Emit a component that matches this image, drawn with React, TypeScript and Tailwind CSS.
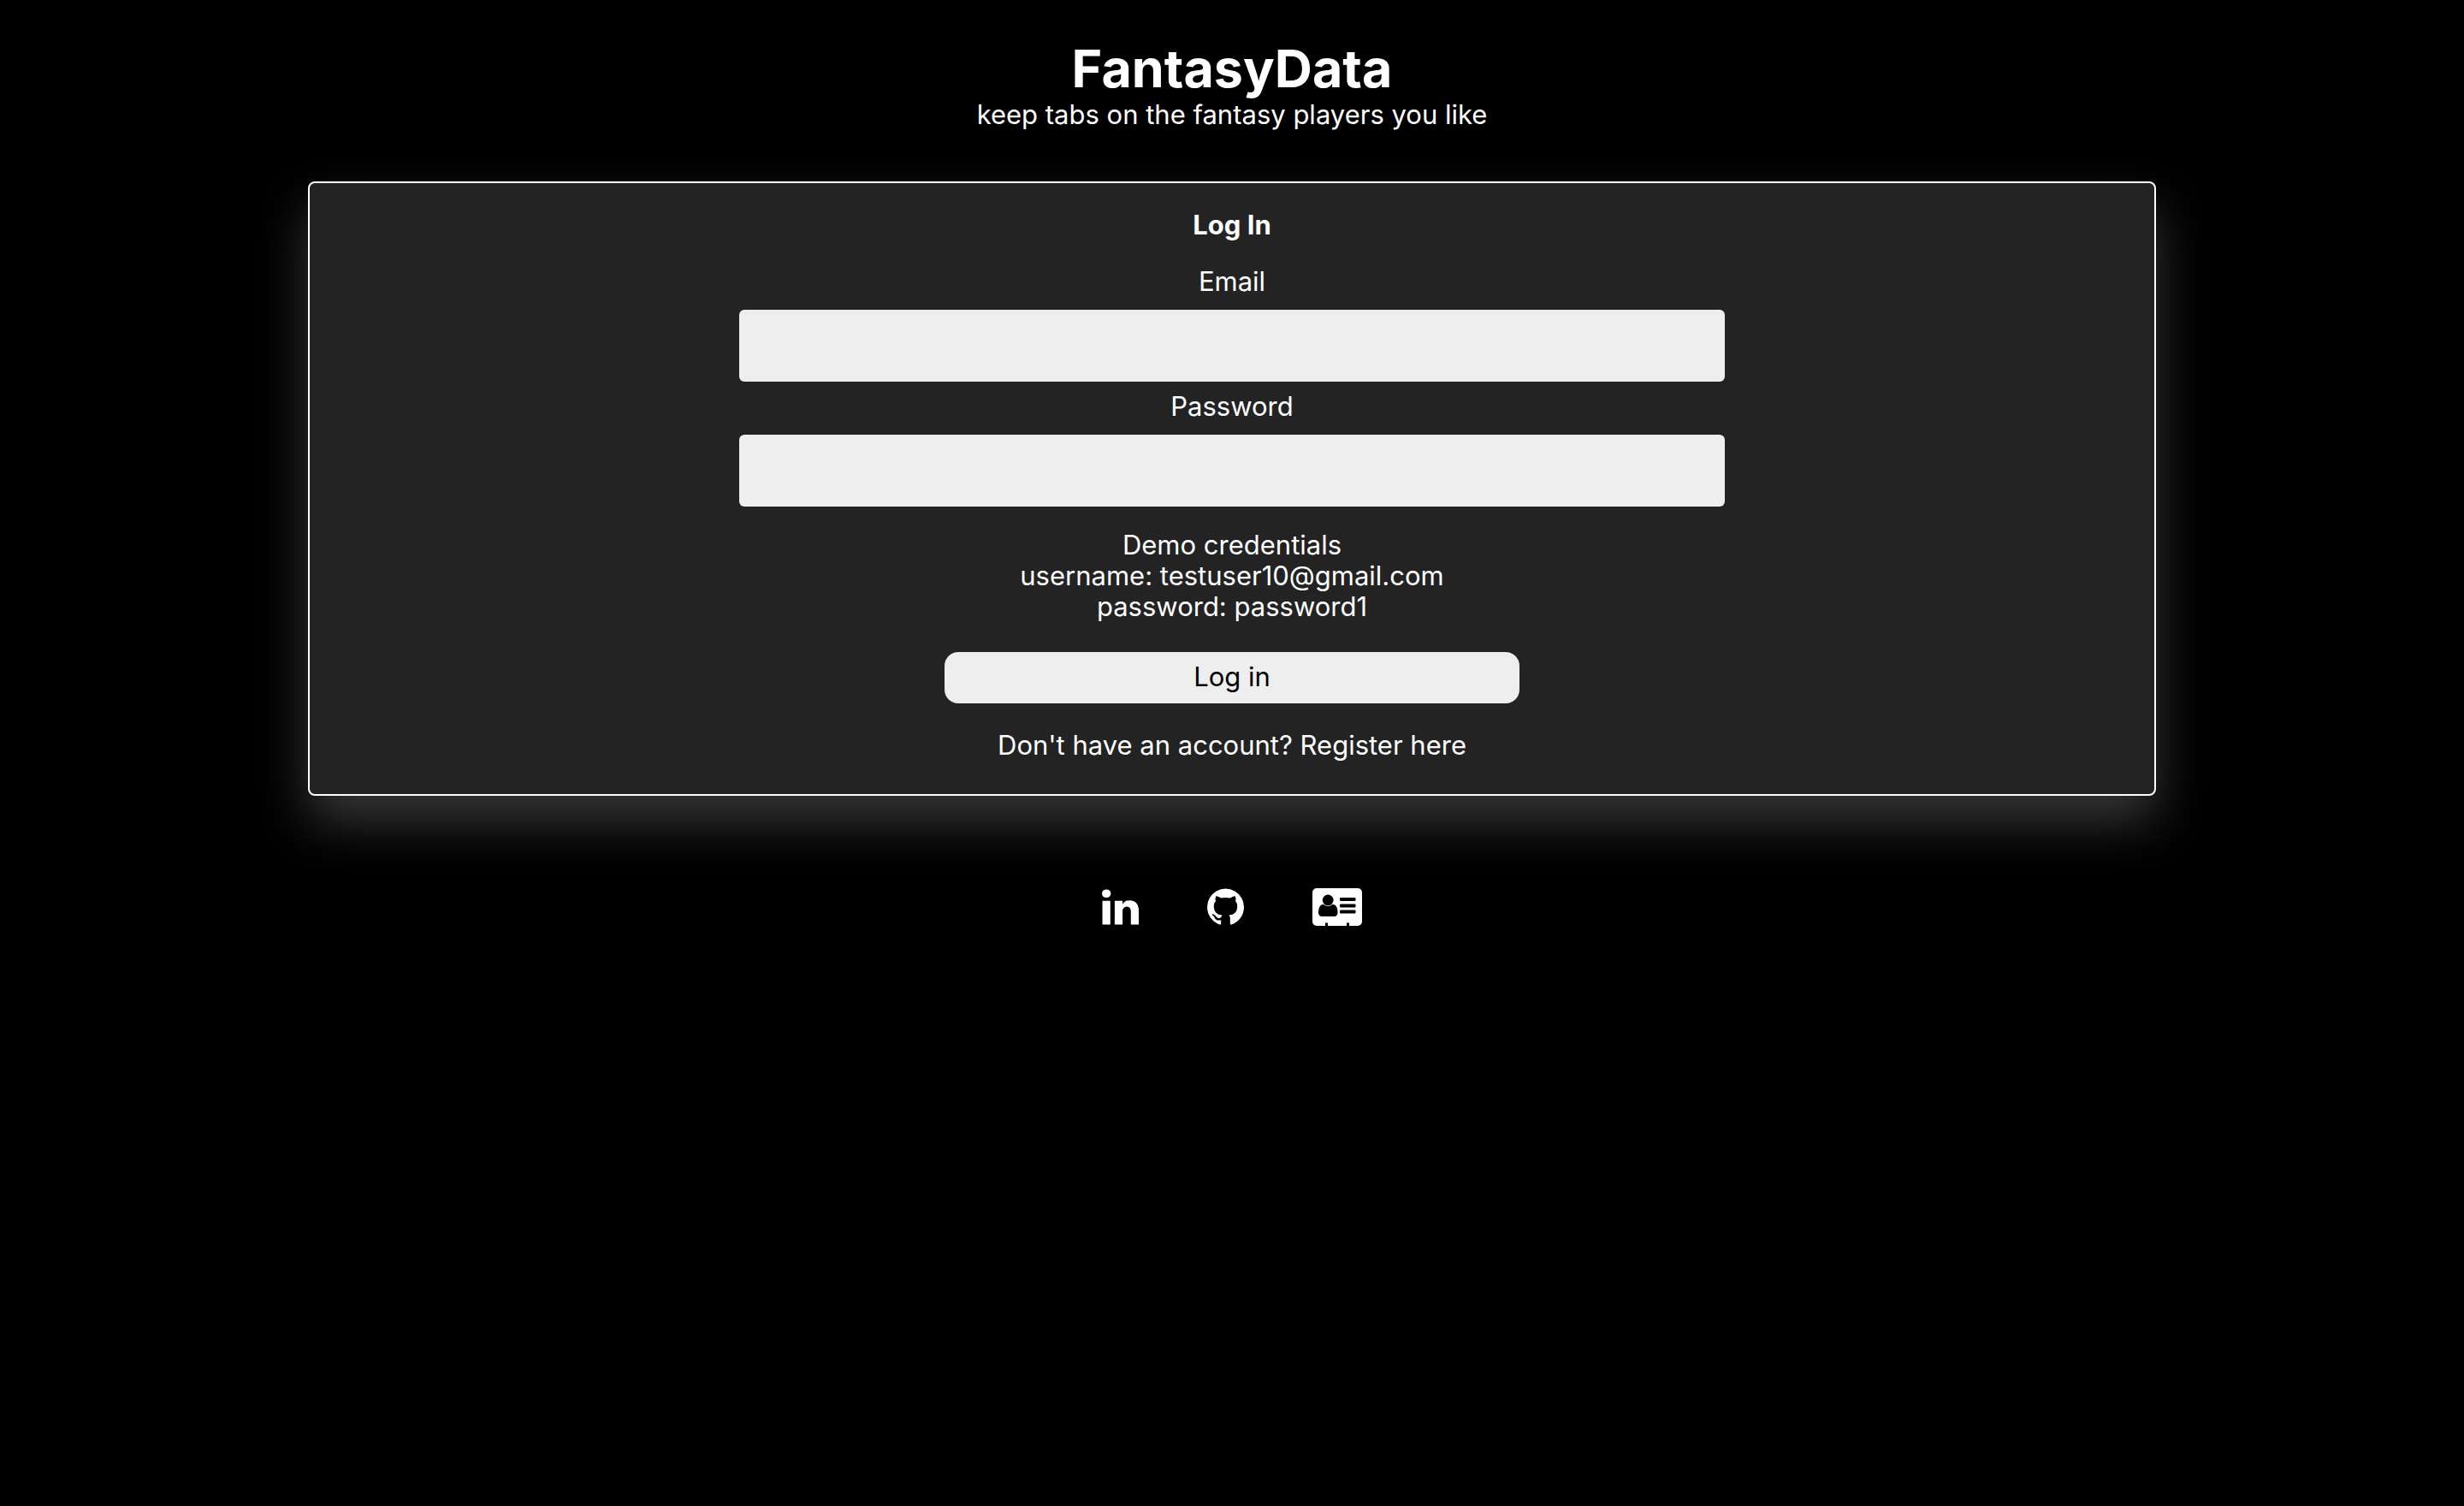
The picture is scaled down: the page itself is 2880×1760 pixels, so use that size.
import type { ComponentProps, ReactNode } from "react";

function Field({ id, label, ...props }: ComponentProps<"input"> & { id: string; label: string }) {
  return (
    <div className="flex w-full flex-col items-center gap-[15px]">
      <label htmlFor={id}>{label}</label>
      <input id={id} name={id} className="h-[84px] w-[53.4%] rounded-md bg-[#eeeeee] px-5 text-black" {...props} />
    </div>
  );
}

function IconLink({ label, children, viewBox, className }: { label: string; children: ReactNode; viewBox: string; className: string }) {
  return (
    <a href="#" aria-label={label}>
      <svg viewBox={viewBox} className={className} fill="currentColor" aria-hidden="true">
        {children}
      </svg>
    </a>
  );
}

export default function App() {
  return (
    <div className="min-h-screen bg-black text-center font-['Inter',sans-serif] text-[31px] leading-9 text-white">
      <header className="pt-11">
        <h1 className="text-[61px] leading-[72px] font-bold">FantasyData</h1>
        <p>keep tabs on the fantasy players you like</p>
      </header>

      <main className="mx-auto mt-15 w-3/4 rounded-lg border-2 border-white bg-[#232323] pt-[31px] pb-[39px] shadow-[0_30px_60px_0_rgba(255,250,252,0.22)]">
        <form className="flex flex-col items-center" onSubmit={(e) => e.preventDefault()}>
          <h2 className="mb-[30px] font-bold">Log In</h2>
          <div className="flex w-full flex-col gap-[11px]">
            <Field id="email" label="Email" type="email" />
            <Field id="password" label="Password" type="password" />
          </div>
          <div className="mt-[27px] mb-[35px]">
            <p>Demo credentials</p>
            <p>username: testuser10@gmail.com</p>
            <p>password: password1</p>
          </div>
          <button type="submit" className="h-15 w-[31.2%] rounded-2xl bg-[#eeeeee] pb-0.5 text-black">
            Log in
          </button>
        </form>
        <p className="mt-[31px]">
          Don't have an account? <a href="#">Register here</a>
        </p>
      </main>

      <footer className="mt-27 flex items-center justify-center gap-20">
        <IconLink label="LinkedIn" viewBox="128 148 1536 1468" className="h-[42px] w-[43px]">
          <path d="M477 625v991h-330v-991h330zm21-306q1 73-50.5 122t-135.5 49h-2q-82 0-132-49t-50-122q0-74 51.5-122.5t134.5-48.5 133 48.5 51 122.5zm1166 729v568h-329v-530q0-105-40.5-164.5t-126.5-59.5q-63 0-105.5 34.5t-63.5 85.5q-11 30-11 81v553h-329q2-399 2-647t-1-296l-1-48h329v144h-2q20-32 41-56t56.5-52 87-43.5 114.5-15.5q171 0 275 113.5t104 332.5z" />
        </IconLink>
        <IconLink label="GitHub" viewBox="128 128 1536 1536" className="h-11 w-[43px]">
          <path d="M896 128q209 0 385.5 103t279.5 279.5 103 385.5q0 251-146.5 451.5t-378.5 277.5q-27 5-40-7t-13-30q0-3 .5-76.5t.5-134.5q0-97-52-142 57-6 102.5-18t94-39 81-66.5 53-105 20.5-150.5q0-119-79-206 37-91-8-204-28-9-81 11t-92 44l-38 24q-93-26-192-26t-192 26q-16-11-42.5-27t-83.5-38.5-85-13.5q-45 113-8 204-79 87-79 206 0 85 20.5 150t52.5 105 80.5 67 94 39 102.5 18q-39 36-49 103-21 10-45 15t-57 5-65.5-21.5-55.5-62.5q-19-32-48.5-52t-49.5-24l-20-3q-21 0-29 4.5t-5 11.5 9 14 13 12l7 5q22 10 43.5 38t31.5 51l10 23q13 38 44 61.5t67 30 69.5 7 55.5-3.5l23-4q0 38 .5 88.5t.5 54.5q0 18-13 30t-40 7q-232-77-378.5-277.5t-146.5-451.5q0-209 103-385.5t279.5-279.5 385.5-103z" />
        </IconLink>
        <IconLink label="Contact" viewBox="0 0 58 44" className="h-11 w-[58px]">
          <path d="M5 0h48a5 5 0 0 1 5 5v34a5 5 0 0 1-5 5H43v-3.500h-3V44H18v-3.500h-3V44H5a5 5 0 0 1-5-5V5a5 5 0 0 1 5-5z" />
          <g fill="#000000">
            <path d="M12.500 19c-4 0-5.500 5-5.500 9.500c0 2.500 1.500 4.500 4 4.500h14.500c2.500 0 4-2 4-4.500c0-4.500-1.500-9.500-5.500-9.500z" />
            <rect x="32" y="11" width="18.500" height="4" rx="1" />
            <rect x="32" y="18.500" width="18.500" height="4" rx="1" />
            <rect x="32" y="25.500" width="18.500" height="4" rx="1" />
          </g>
          <circle cx="18.200" cy="14" r="7.200" />
          <circle cx="18.200" cy="14" r="6.400" fill="#000000" />
        </IconLink>
      </footer>
    </div>
  );
}
